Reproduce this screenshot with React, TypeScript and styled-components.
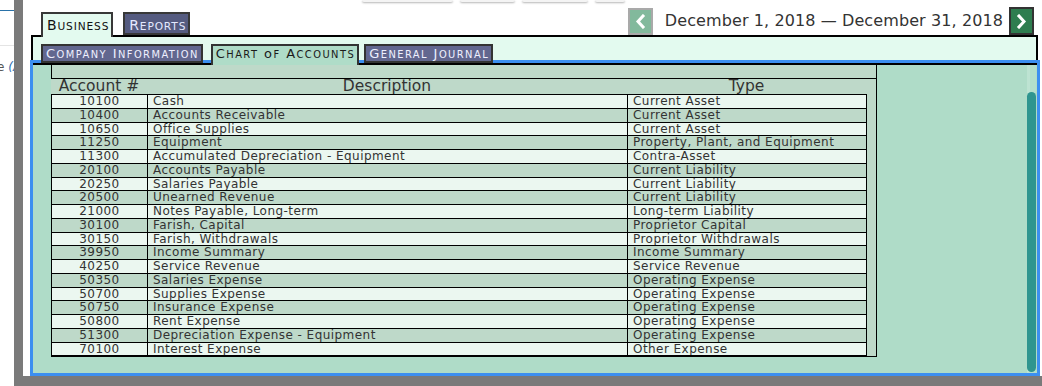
import React from "react";
import styled, { createGlobalStyle } from "styled-components";

const accounts: [string, string, string][] = [
  ["10100", "Cash", "Current Asset"],
  ["10400", "Accounts Receivable", "Current Asset"],
  ["10650", "Office Supplies", "Current Asset"],
  ["11250", "Equipment", "Property, Plant, and Equipment"],
  ["11300", "Accumulated Depreciation - Equipment", "Contra-Asset"],
  ["20100", "Accounts Payable", "Current Liability"],
  ["20250", "Salaries Payable", "Current Liability"],
  ["20500", "Unearned Revenue", "Current Liability"],
  ["21000", "Notes Payable, Long-term", "Long-term Liability"],
  ["30100", "Farish, Capital", "Proprietor Capital"],
  ["30150", "Farish, Withdrawals", "Proprietor Withdrawals"],
  ["39950", "Income Summary", "Income Summary"],
  ["40250", "Service Revenue", "Service Revenue"],
  ["50350", "Salaries Expense", "Operating Expense"],
  ["50700", "Supplies Expense", "Operating Expense"],
  ["50750", "Insurance Expense", "Operating Expense"],
  ["50800", "Rent Expense", "Operating Expense"],
  ["51300", "Depreciation Expense - Equipment", "Operating Expense"],
  ["70100", "Interest Expense", "Other Expense"],
];

const GlobalStyle = createGlobalStyle`
  body {
    margin: 0;
    background: #7a7a7a;
    font-family: "DejaVu Sans", Verdana, sans-serif;
    color: #333;
  }
  * { box-sizing: border-box; }
`;

const Screen = styled.div`
  display: flex;
  height: 386px;
  overflow: hidden;
`;

const BehindPage = styled.div`
  width: 14px;
  background: #fff;
  overflow: hidden;
  display: flex;
  flex-direction: column;
`;

const Rule = styled.div<{ $top: number; $color: string }>`
  margin-top: ${(p) => p.$top}px;
  height: 1px;
  background: ${(p) => p.$color};
`;

const Snippet = styled.div`
  margin-top: 14px;
  font-size: 12px;
  white-space: nowrap;
  text-indent: -3px;
  color: #555;

  span {
    color: #2b6cb0;
    font-style: italic;
  }
`;

const Gutter = styled.div`
  width: 9px;
`;

const Dialog = styled.div`
  width: 1019px;
  height: 376px;
  background: #fff;
  display: flex;
  flex-direction: column;
  padding: 0 4px 0 8px;
`;

const GhostRow = styled.div`
  display: flex;
  height: 2px;
  margin: 0 0 5px 331px;
  gap: 7px;
`;

const Ghost = styled.div<{ $w: number }>`
  width: ${(p) => p.$w}px;
  background: #f4f4f4;
  border-radius: 0 0 3px 3px;
  box-shadow: 0 1px 2px rgba(0, 0, 0, 0.3);
`;

const TopRow = styled.div`
  display: flex;
  align-items: flex-end;
  justify-content: space-between;
  height: 28px;
  padding: 0 4px 0 10px;
`;

const Tabs = styled.div`
  display: flex;
  align-items: flex-end;
  gap: 10px;
`;

// small caps with a taller lower case than the browser's synthetic one
const Lower = styled.span<{ $ratio: number }>`
  font-size: ${(p) => p.$ratio}em;
  text-transform: uppercase;
`;

function SmallCaps({ text, ratio }: { text: string; ratio: number }) {
  const words = text.split(" ");
  return (
    <>
      {words.map((w, i) => (
        <React.Fragment key={i}>
          {i > 0 && " "}
          {w[0]}
          <Lower $ratio={ratio}>{w.slice(1)}</Lower>
        </React.Fragment>
      ))}
    </>
  );
}

const MainTab = styled.div<{ $active?: boolean }>`
  position: relative;
  z-index: ${(p) => (p.$active ? 2 : 1)};
  height: ${(p) => (p.$active ? 25 : 23)}px;
  margin-bottom: ${(p) => (p.$active ? -2 : 0)}px;
  padding: 1px 2px 0 4px;
  border: 2px solid #383838;
  border-bottom: ${(p) => (p.$active ? "none" : "2px solid #383838")};
  background: ${(p) => (p.$active ? "#e3faef" : "#555b80")};
  color: ${(p) => (p.$active ? "#111" : "#e4e9ff")};
  font-size: 14px;
  letter-spacing: 0.85px;
  line-height: 20px;
`;

const DateNav = styled.div`
  display: flex;
  align-items: flex-end;
`;

const NavButton = styled.button<{ $enabled?: boolean }>`
  width: 25px;
  height: ${(p) => (p.$enabled ? 28 : 27)}px;
  padding: 0;
  display: flex;
  align-items: center;
  justify-content: center;
  background: ${(p) => (p.$enabled ? "#2e7d4f" : "#82b99c")};
  border: 2px solid ${(p) => (p.$enabled ? "#333" : "#a9a9a9")};
  border-radius: 0;
`;

const DateRange = styled.div`
  font-size: 16px;
  letter-spacing: 0.1px;
  line-height: 24px;
  margin: 0 6px 2px 12px;
  color: #333;
`;

const Panel = styled.div`
  flex: 1;
  display: flex;
  flex-direction: column;
  border: 2px solid #000;
  border-bottom: none;
  background: #e3faef;
`;

const SubTabs = styled.div`
  display: flex;
  align-items: flex-start;
  gap: 6px;
  height: 26px;
  padding: 7px 0 0 8px;
`;

const SubTab = styled.div<{ $active?: boolean }>`
  position: relative;
  z-index: ${(p) => (p.$active ? 2 : 0)};
  height: ${(p) => (p.$active ? 21 : 19)}px;
  margin: ${(p) => (p.$active ? "0 -1px 0 2px" : "0")};
  padding: 0 2px 0 3px;
  border: 2px solid #333;
  border-bottom: ${(p) => (p.$active ? "none" : "2px solid #333")};
  background: ${(p) => (p.$active ? "#afdcc8" : "#62678f")};
  color: ${(p) => (p.$active ? "#1a1a1a" : "#eef0ff")};
  font-size: 13px;
  letter-spacing: 1.45px;
  line-height: 15px;
  white-space: nowrap;
`;

const Content = styled.div`
  flex: 1;
  display: flex;
  margin: 0 -1px 3px 0;
  padding-left: 18px;
  border-top: 2px solid #000;
  outline: 3px solid #3c8ff0;
  background: #afdcc8;
`;

const TableBox = styled.div`
  align-self: flex-start;
  width: 826px;
  background: #bed9c9;
  border-right: 1px solid #000;
  border-bottom: 1px solid #000;
`;

const TopStrip = styled.div`
  height: 14px;
  border-left: 1px solid #000;
  border-bottom: 1px solid #000;
`;

const Inner = styled.div`
  width: 815px;
`;

const HeadRow = styled.div`
  display: grid;
  grid-template-columns: 96px 480px 239px;
  height: 15px;
  font-size: 15.5px;
  line-height: 15px;
  color: #333;

  span {
    text-align: center;
  }
`;

const Table = styled.table`
  width: 815px;
  table-layout: fixed;
  border-collapse: collapse;
  font-size: 12px;
  letter-spacing: 0.45px;
  color: #333;
`;

const Row = styled.tr<{ $shade: boolean }>`
  background: ${(p) => (p.$shade ? "#bed9c9" : "#ebf7f0")};
`;

const Cell = styled.td<{ $center?: boolean }>`
  border: 1px solid #000;
  padding: 0 5px;
  line-height: 12.75px;
  white-space: nowrap;
  overflow: hidden;
  text-align: ${(p) => (p.$center ? "center" : "left")};
`;

const Track = styled.div`
  margin-left: auto;
  margin-right: 1px;
  width: 9px;
  background: linear-gradient(to right, #bde3d2 0 3px, #b3dfcb 3px);
`;

const Thumb = styled.div`
  margin-top: 27px;
  height: 280px;
  background: #2f958f;
  border-radius: 5px;
`;

function Chevron({ dir }: { dir: "left" | "right" }) {
  const points = dir === "left" ? "8,2 3,7.5 8,13" : "3,2 8,7.5 3,13";
  return (
    <svg width="11" height="15" viewBox="0 0 11 15">
      <polyline
        points={points}
        fill="none"
        stroke="#fff"
        strokeWidth="3"
        strokeLinecap="square"
      />
    </svg>
  );
}

export default function App() {
  return (
    <>
      <GlobalStyle />
      <Screen>
        <BehindPage>
          <Rule $top={10} $color="#2a72a8" />
          <Rule $top={34} $color="#e4e4e4" />
          <Snippet>
            e <span>(A</span>
          </Snippet>
        </BehindPage>
        <Gutter />
        <Dialog>
          <GhostRow>
            <Ghost $w={91} />
            <Ghost $w={55} />
            <Ghost $w={66} />
            <Ghost $w={30} />
          </GhostRow>
          <TopRow>
            <Tabs>
              <MainTab $active>
                <SmallCaps text="Business" ratio={0.76} />
              </MainTab>
              <MainTab>
                <SmallCaps text="Reports" ratio={0.76} />
              </MainTab>
            </Tabs>
            <DateNav>
              <NavButton aria-label="Previous period">
                <Chevron dir="left" />
              </NavButton>
              <DateRange>December 1, 2018 — December 31, 2018</DateRange>
              <NavButton $enabled aria-label="Next period">
                <Chevron dir="right" />
              </NavButton>
            </DateNav>
          </TopRow>
          <Panel>
            <SubTabs>
              <SubTab>
                <SmallCaps text="Company Information" ratio={0.76} />
              </SubTab>
              <SubTab $active>
                <SmallCaps text="Chart of Accounts" ratio={0.76} />
              </SubTab>
              <SubTab>
                <SmallCaps text="General Journal" ratio={0.76} />
              </SubTab>
            </SubTabs>
            <Content>
              <TableBox>
                <TopStrip />
                <Inner>
                  <HeadRow>
                    <span>Account #</span>
                    <span>Description</span>
                    <span>Type</span>
                  </HeadRow>
                  <Table>
                    <colgroup>
                      <col style={{ width: 96 }} />
                      <col style={{ width: 480 }} />
                      <col style={{ width: 239 }} />
                    </colgroup>
                    <tbody>
                      {accounts.map(([num, desc, type], i) => (
                        <Row key={num} $shade={i % 2 === 1}>
                          <Cell $center>{num}</Cell>
                          <Cell>{desc}</Cell>
                          <Cell>{type}</Cell>
                        </Row>
                      ))}
                    </tbody>
                  </Table>
                </Inner>
              </TableBox>
              <Track>
                <Thumb />
              </Track>
            </Content>
          </Panel>
        </Dialog>
      </Screen>
    </>
  );
}
